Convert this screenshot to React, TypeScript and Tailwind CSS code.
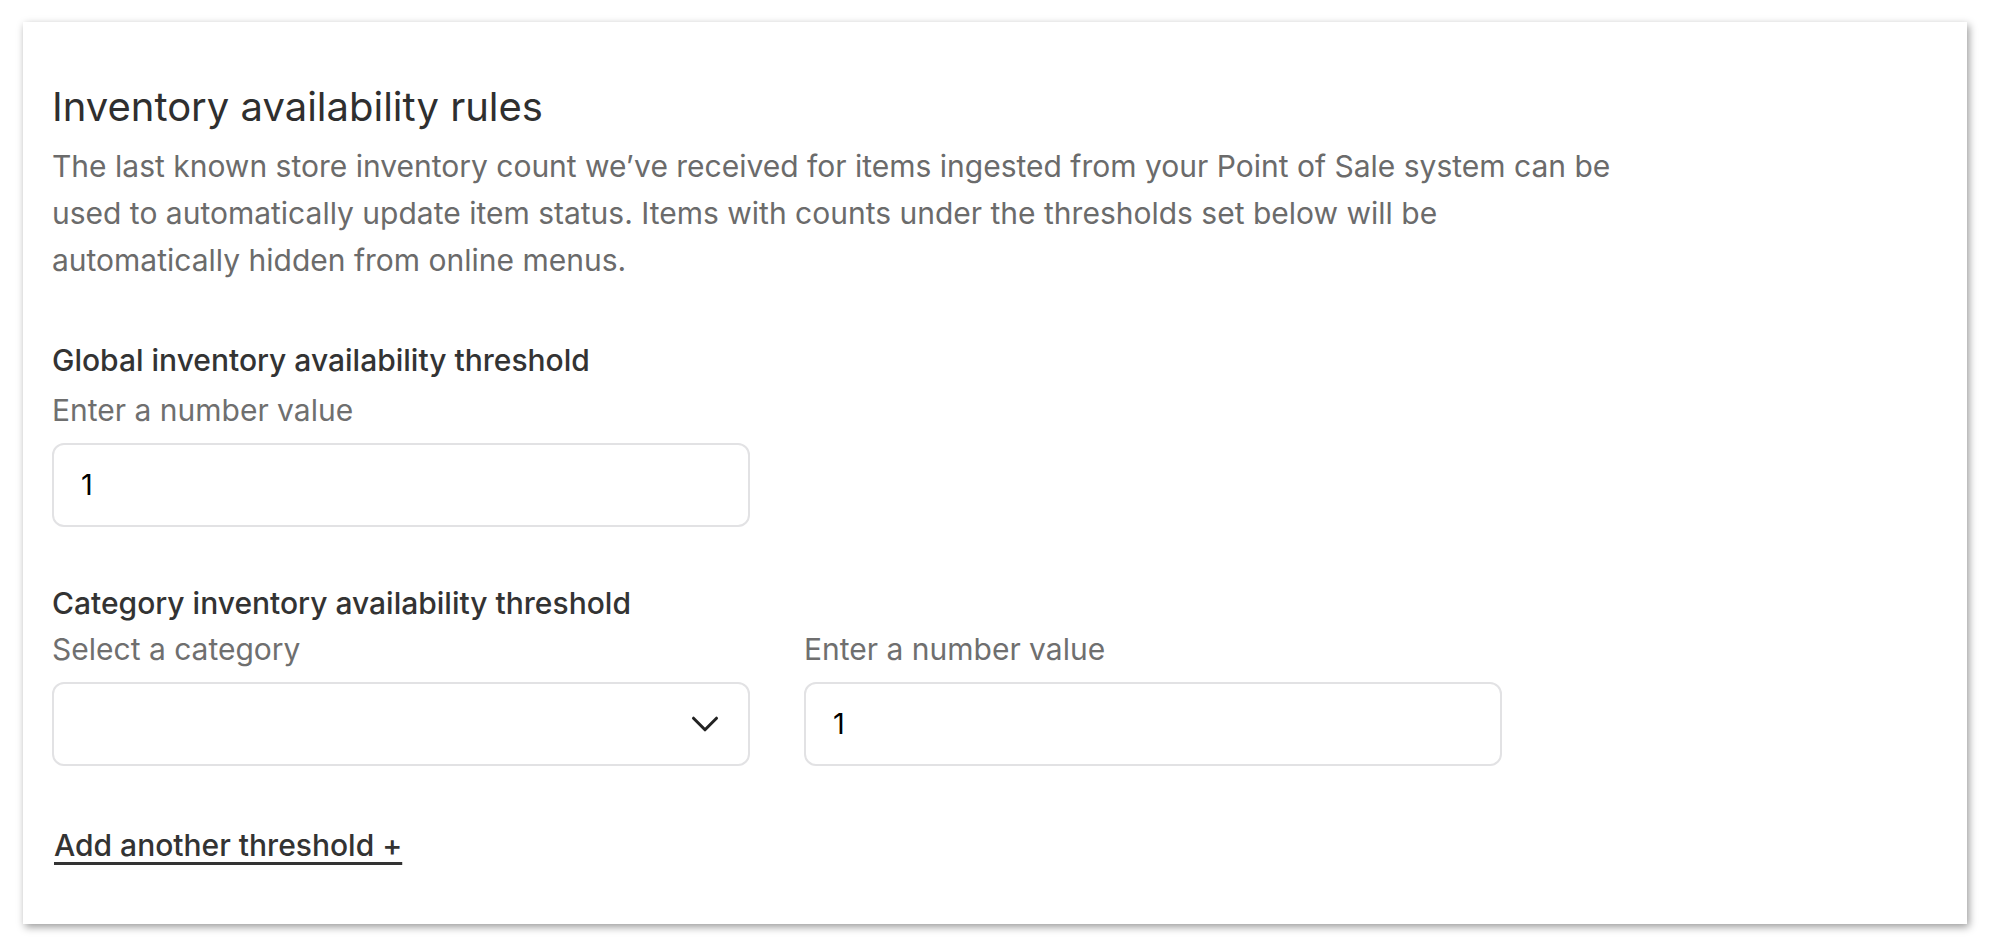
import { ChevronDown } from "lucide-react";

const font = { fontFamily: "Inter, 'Noto Sans', sans-serif" };

function Field({ label, value }: { label: string; value: string }) {
  return (
    <div className="w-[698px]">
      <p className="text-[30px] leading-[46px] text-[#6f6f6f]">{label}</p>
      <div className="mt-[10px] h-[84px] rounded-[12px] border-2 border-[#e2e2e4] flex items-center px-[27px]">
        <span className="text-[29px] text-black">{value}</span>
      </div>
    </div>
  );
}

export default function App() {
  return (
    <div className="min-h-screen bg-white pt-[22px] pl-[23px] pr-[31px] pb-[22px]" style={font}>
      <div className="bg-white shadow-[2px_3px_8px_rgba(0,0,0,0.4)] pt-[63px] pb-[56px] pl-[29px] pr-[29px]">
        <h1 className="text-[40px] leading-[44px] text-[#2f2f2f]">Inventory availability rules</h1>
        <p className="mt-[14px] max-w-[1568px] text-[30px] leading-[47px] text-[#6b6b6b]">
          The last known store inventory count we’ve received for items ingested from your Point of Sale system can be
          used to automatically update item status. Items with counts under the thresholds set below will be
          automatically hidden from online menus.
        </p>

        {/* Global threshold */}
        <h2 className="mt-[53px] mb-[4px] text-[30px] leading-[46px] font-medium text-[#333]">
          Global inventory availability threshold
        </h2>
        <Field label="Enter a number value" value="1" />

        {/* Category threshold */}
        <h2 className="mt-[53px] text-[30px] leading-[46px] font-medium text-[#333]">
          Category inventory availability threshold
        </h2>
        <div className="flex gap-[54px]">
          <div className="w-[698px]">
            <p className="text-[30px] leading-[46px] text-[#6f6f6f]">Select a category</p>
            <div className="mt-[10px] h-[84px] rounded-[12px] border-2 border-[#e2e2e4] flex items-center justify-end pr-[20px]">
              <ChevronDown className="w-[46px] h-[46px] text-[#222]" strokeWidth={1.6} />
            </div>
          </div>
          <Field label="Enter a number value" value="1" />
        </div>

        <a
          href="#"
          className="inline-block mt-[56px] ml-[2px] text-[30px] leading-[46px] font-medium text-[#333] underline decoration-[3px] underline-offset-[6px]"
        >
          Add another threshold +
        </a>
      </div>
    </div>
  );
}
